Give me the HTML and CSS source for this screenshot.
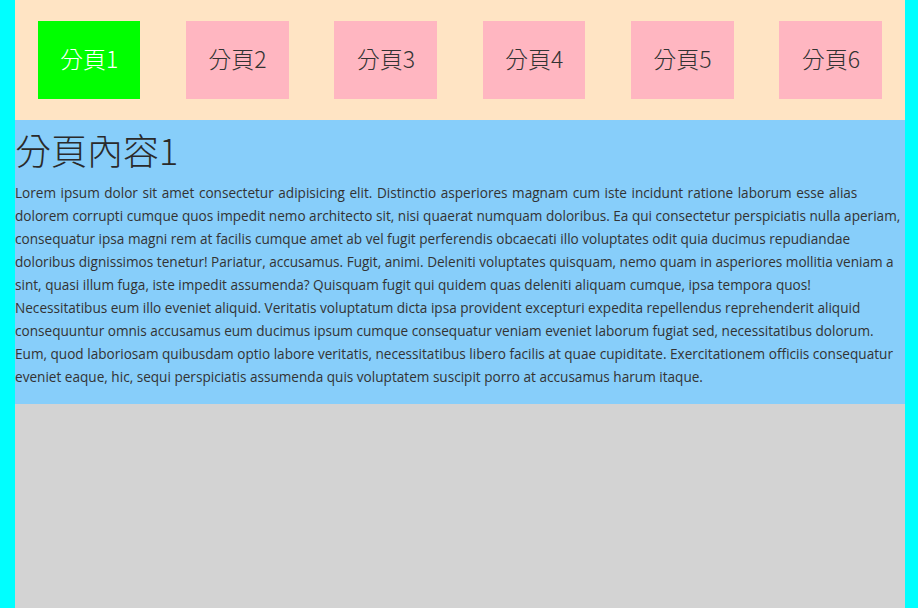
FILE: index.html
```html
<!DOCTYPE html>
<html lang="zh-Hant">
<head>
<meta charset="utf-8">
<title>分頁</title>
<link rel="stylesheet" href="styles.css">
</head>
<body>
<div class="container">
  <nav class="tabs">
    <div class="tab active">分頁1</div>
    <div class="tab">分頁2</div>
    <div class="tab">分頁3</div>
    <div class="tab">分頁4</div>
    <div class="tab">分頁5</div>
    <div class="tab">分頁6</div>
  </nav>
  <section class="panel">
    <h1 class="panel-title">分頁內容1</h1>
    <p class="panel-text">Lorem ipsum dolor sit amet consectetur adipisicing elit. Distinctio asperiores magnam cum iste incidunt ratione laborum esse alias dolorem corrupti cumque quos impedit nemo architecto sit, nisi quaerat numquam doloribus. Ea qui consectetur perspiciatis nulla aperiam, consequatur ipsa magni rem at facilis cumque amet ab vel fugit perferendis obcaecati illo voluptates odit quia ducimus repudiandae doloribus dignissimos tenetur! Pariatur, accusamus. Fugit, animi. Deleniti voluptates quisquam, nemo quam in asperiores mollitia veniam a sint, quasi illum fuga, iste impedit assumenda? Quisquam fugit qui quidem quas deleniti aliquam cumque, ipsa tempora quos! Necessitatibus eum illo eveniet aliquid. Veritatis voluptatum dicta ipsa provident excepturi expedita repellendus reprehenderit aliquid consequuntur omnis accusamus eum ducimus ipsum cumque consequatur veniam eveniet laborum fugiat sed, necessitatibus dolorum. Eum, quod laboriosam quibusdam optio labore veritatis, necessitatibus libero facilis at quae cupiditate. Exercitationem officiis consequatur eveniet eaque, hic, sequi perspiciatis assumenda quis voluptatem suscipit porro at accusamus harum itaque.</p>
  </section>
</div>
</body>
</html>
```

FILE: styles.css
```css
html, body {
  margin: 0;
  padding: 0;
  height: 100%;
}
body {
  background: #00ffff;
  font-family: "Open Sans", "Noto Sans CJK TC", sans-serif;
  color: #333;
}
.container {
  width: 890px;
  margin-left: 15px;
  min-height: 100%;
  background: #d3d3d3;
}
.tabs {
  display: flex;
  justify-content: space-around;
  padding: 21px 0;
  background: #ffe4c4;
}
.tab {
  box-sizing: border-box;
  width: 102.67px;
  height: 78px;
  padding-bottom: 4px;
  display: flex;
  align-items: center;
  justify-content: center;
  background: #ffb6c1;
  font-family: "Noto Sans CJK TC", sans-serif;
  font-size: 23px;
  font-weight: 300;
  color: #333;
}
.tab.active {
  background: #00ff00;
  color: #fff;
}
.panel {
  background: #87cefa;
  padding: 5px 0 16px;
}
.panel-title {
  margin: 0;
  font-family: "Noto Sans CJK TC", sans-serif;
  font-size: 36px;
  font-weight: 300;
  line-height: 48px;
  color: #2a2a2a;
}
.panel-text {
  margin: 8px 0 0;
  font-size: 13.6px;
  line-height: 23px;
}
.panel-text::first-line {
  word-spacing: 1px;
}
```
